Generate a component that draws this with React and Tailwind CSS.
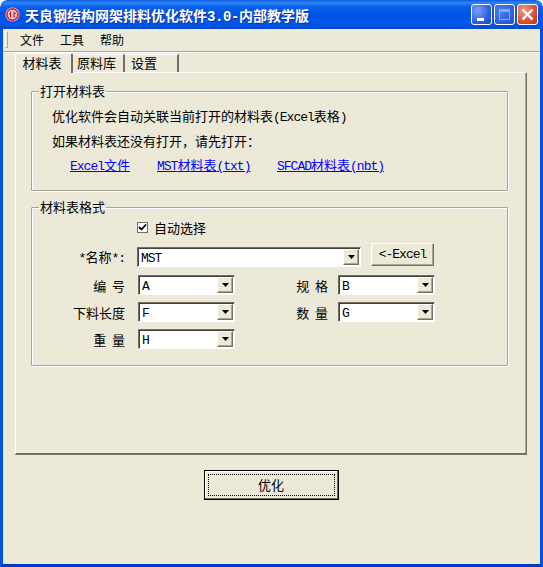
import React from "react";

const CJK = '"Noto Sans CJK SC", "Liberation Sans", sans-serif';

function L({ children }) {
  return <span className="font-['Liberation_Mono',monospace] text-[13px] leading-[0] tracking-[-1px]">{children}</span>;
}

function Arrow() {
  return (
    <div className="flex w-[16px] shrink-0 items-center justify-center self-stretch border border-t-[#ffffff] border-l-[#ffffff] border-r-[#716f64] border-b-[#716f64] bg-[#ece9d8] shadow-[inset_-1px_-1px_0_#aca899]">
      <svg width="7" height="4" viewBox="0 0 7 4"><path d="M0 0h7L3.5 4z" fill="#000" /></svg>
    </div>
  );
}

function Combo({ value, w, className = "" }) {
  return (
    <div className={`flex h-[20px] ${w} ${className} border border-t-[#716f64] border-l-[#716f64] border-r-[#ffffff] border-b-[#ffffff] bg-white p-px shadow-[inset_1px_1px_0_#404040]`}>
      <div className="flex-1 pl-[2px] text-[13px] leading-[16px] text-black"><L>{value}</L></div>
      <Arrow />
    </div>
  );
}

function Group({ title, className, children }) {
  return (
    <fieldset className={`ml-[15px] mr-[18px] min-w-0 rounded-[1px] border border-[#a5a597] shadow-[1px_1px_0_#ffffff,inset_1px_1px_0_#ffffff] ${className}`}>
      <legend className="ml-[7px] px-[1px] pb-[2px] text-[13px] leading-[15px] text-black">{title}</legend>
      {children}
    </fieldset>
  );
}

function Field({ label, labelClass, value }) {
  return (
    <div className="flex items-center">
      <div className={`text-[13px] leading-[15px] text-black ${labelClass}`}>{label}</div>
      <Combo value={value} w="w-[97px]" />
    </div>
  );
}

function WinBtn({ className, children }) {
  return (
    <div className={`flex h-[21px] w-[21px] items-center justify-center rounded-[3px] border border-white ${className}`}>
      {children}
    </div>
  );
}

export default function App() {
  return (
    <div className="flex h-[567px] w-[543px] flex-col overflow-hidden rounded-t-[7px] bg-[#ffffff]" style={{ fontFamily: CJK }}>
      {/* title bar */}
      <div className="flex h-[29px] shrink-0 items-center rounded-t-[7px] bg-[linear-gradient(180deg,#0a5ae0_0%,#2f86f5_10%,#0a62ec_22%,#0054e3_50%,#0058ee_80%,#0048c8_100%)] pl-[5px] pr-[5px]">
        <svg width="15" height="15" viewBox="0 0 15 15" className="shrink-0">
          <circle cx="7.5" cy="7.5" r="7" fill="#f4d0d8" />
          <circle cx="7.5" cy="7.5" r="5.6" fill="none" stroke="#e0202a" strokeWidth="1.6" />
          <path d="M5.5 4.5v6M5.5 7h-1.5M9 4.5v5.5h1.5M9 7l1.8-1" stroke="#d01020" strokeWidth="1.1" fill="none" />
        </svg>
        <div className="ml-[5px] flex-1 whitespace-nowrap text-[14px] font-bold leading-[16px] text-white [text-shadow:1px_1px_0_#0a2ea0]">
          天良钢结构网架排料优化软件<span className="font-['Liberation_Mono',monospace] text-[14px] leading-[0] tracking-[-0.4px]">3.0-</span>内部教学版
        </div>
        <div className="flex items-center gap-[2px]">
          <WinBtn className="bg-[radial-gradient(circle_at_30%_30%,#7aa0f5,#2a5be0_65%,#1c43c0)]">
            <div className="mt-[9px] mr-[3px] h-[3px] w-[7px] bg-white" />
          </WinBtn>
          <WinBtn className="border-[#7fa4f0] bg-[radial-gradient(circle_at_30%_30%,#4f7fe8,#2a5be0_70%,#2450c8)]">
            <div className="h-[11px] w-[11px] border border-t-[3px] border-[#86a6ee]" />
          </WinBtn>
          <WinBtn className="bg-[radial-gradient(circle_at_30%_30%,#f09a80,#dd5030_60%,#b8341c)]">
            <svg width="13" height="13" viewBox="0 0 13 13"><path d="M1.5 1.5l10 10M11.5 1.5l-10 10" stroke="#fff" strokeWidth="2.4" /></svg>
          </WinBtn>
        </div>
      </div>

      {/* client area */}
      <div className="flex min-h-0 flex-1 flex-col border-x-[3px] border-b-[3px] border-x-[#0052e0] border-b-[#0038c8] bg-[#ece9d8]">
        {/* menu */}
        <div className="flex h-[23px] shrink-0 items-center border-b border-b-[#aca899] pb-[1px] shadow-[0_1px_0_#ffffff]">
          <div className="ml-[2px] h-[17px] w-[3px] border border-r-[#aca899] border-b-[#aca899] border-t-white border-l-white" />
          <div className="ml-[12px] flex gap-[16px] text-[12px] leading-[16px] text-black">
            <span>文件</span>
            <span>工具</span>
            <span>帮助</span>
          </div>
        </div>

        {/* tabs */}
        <div className="ml-[12px] flex h-[20px] shrink-0 items-end text-[13px] leading-[15px] text-black">
          <div className="relative z-10 -mb-px flex h-[20px] w-[58px] items-center justify-center rounded-t-[2px] border-t border-l border-t-white border-l-white border-r-2 border-r-[#716f64] bg-[#ece9d8] pb-[3px] pr-[3px]">
            材料表
          </div>
          <div className="flex h-[18px] w-[52px] items-center justify-center border-t border-t-white border-r-2 border-r-[#716f64] pb-[2px] pr-[3px]">原料库</div>
          <div className="flex h-[18px] w-[54px] items-center pl-[6px] pb-[2px] border-t border-t-white border-r-2 border-r-[#716f64]">设置</div>
        </div>

        {/* panel */}
        <div className="ml-[12px] mr-[13px] flex h-[383px] shrink-0 flex-col border-t border-l border-t-white border-l-white border-r border-b-2 border-r-[#716f64] border-b-[#716f64] pt-[10px] shadow-[inset_-1px_0_0_#aca899]">
          <Group title="打开材料表" className="h-[108px]">
            <div className="pl-[20px]">
              <div className="mt-[8px] text-[13px] leading-[15px] text-black">
                优化软件会自动关联当前打开的材料表<L>(Excel</L>表格<L>)</L>
              </div>
              <div className="mt-[10px] text-[13px] leading-[15px] text-black">如果材料表还没有打开，请先打开：</div>
              <div className="mt-[9px] flex pl-[18px] text-[13px] leading-[15px] text-[#0000ff] underline">
                <span className="w-[87px]"><L>Excel</L>文件</span>
                <span className="w-[120px]"><L>MST</L>材料表<L>(txt)</L></span>
                <span><L>SFCAD</L>材料表<L>(nbt)</L></span>
              </div>
            </div>
          </Group>

          <Group title="材料表格式" className="mt-[8px] h-[167px]">
            <div className="mt-[4px] flex items-center pl-[105px]">
              <div className="flex h-[11px] w-[11px] items-center justify-center border border-[#716f64] bg-white">
                <svg width="9" height="9" viewBox="0 0 9 9"><path d="M1 4l2.5 2.5L8 1.5" stroke="#000" strokeWidth="1.8" fill="none" /></svg>
              </div>
              <span className="ml-[6px] text-[13px] leading-[15px] text-black">自动选择</span>
            </div>
            <div className="mt-[8px] flex items-start">
              <div className="mt-[6px] w-[105px] pr-[12px] text-right text-[13px] leading-[15px] text-black"><L>*</L>名称<L>*:</L></div>
              <Combo value="MST" w="w-[224px]" className="mt-[4px]" />
              <div className="ml-[10px] flex h-[23px] w-[63px] items-center justify-center border border-t-white border-l-white border-r-[#716f64] border-b-[#716f64] text-[13px] leading-[15px] text-black shadow-[inset_-1px_-1px_0_#aca899]">
                <L>&lt;-Excel</L>
              </div>
            </div>
            <div className="mt-[8px] grid grid-cols-[212px_auto] gap-y-[7px] justify-start">
              <Field label="编  号" labelClass="w-[106px] whitespace-pre pr-[13px] text-right" value="A" />
              <Field label="规  格" labelClass="w-[94px] whitespace-pre pr-[10px] text-right" value="B" />
              <Field label="下料长度" labelClass="w-[106px] pr-[13px] text-right" value="F" />
              <Field label="数  量" labelClass="w-[94px] whitespace-pre pr-[10px] text-right" value="G" />
              <Field label="重  量" labelClass="w-[106px] whitespace-pre pr-[13px] text-right" value="H" />
            </div>
          </Group>
        </div>

        {/* action */}
        <div className="mt-[15px] flex justify-center">
          <div className="ml-[-1px] h-[30px] w-[135px] border border-black bg-[#ece9d8] p-[3px] shadow-[inset_-1px_-1px_0_#716f64,inset_1px_1px_0_#ffffff]">
            <div className="flex h-full items-center justify-center border border-dotted border-black pb-[2px] text-[13px] leading-[15px] text-black">优化</div>
          </div>
        </div>
      </div>
    </div>
  );
}
